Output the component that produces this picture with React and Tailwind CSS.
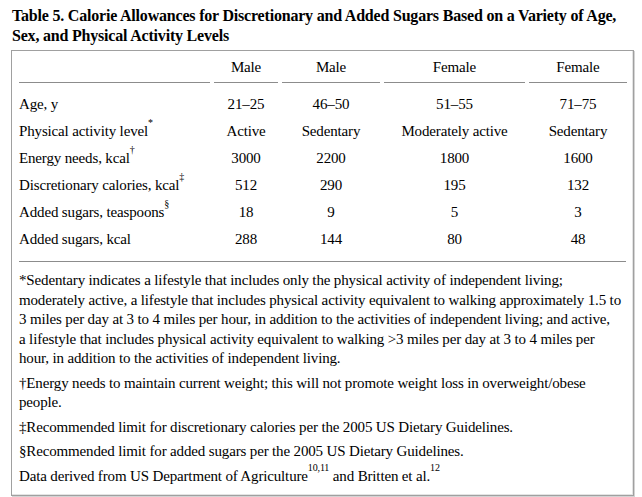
import React from "react";

const rows = [
  { label: "Age, y", sup: null, vals: ["21–25", "46–50", "51–55", "71–75"] },
  { label: "Physical activity level", sup: "*", vals: ["Active", "Sedentary", "Moderately active", "Sedentary"] },
  { label: "Energy needs, kcal", sup: "†", vals: ["3000", "2200", "1800", "1600"] },
  { label: "Discretionary calories, kcal", sup: "‡", vals: ["512", "290", "195", "132"] },
  { label: "Added sugars, teaspoons", sup: "§", vals: ["18", "9", "5", "3"] },
  { label: "Added sugars, kcal", sup: null, vals: ["288", "144", "80", "48"] },
];

const heads = ["Male", "Male", "Female", "Female"];

const cols = "grid grid-cols-[191px_64px_98px_141px_98px] gap-x-[4px]";

const App = () => {
  return (
    <div className="w-[642px] h-[497px] bg-white text-black overflow-hidden font-['Liberation_Serif']">
      <h1 className="pl-[12px] pt-[6px] text-[16px] leading-[20px] font-bold tracking-[-0.2px] whitespace-nowrap">
        Table 5. Calorie Allowances for Discretionary and Added Sugars Based on a Variety of Age,
        <br />
        Sex, and Physical Activity Levels
      </h1>

      <div className="ml-[11px] mt-[4px] w-[623px] h-[446px] border border-[#a0a0a0] shadow-[inset_-1px_-1px_0_#e4e4e4,1px_1px_0_#d4d4d4] px-[7px] text-[15px] tracking-[-0.15px]">
        {/* encabezado */}
        <div className={`${cols} pt-[7px]`}>
          <div className="border-b border-[#8c8c8c] h-[25px]" />
          {heads.map((h, i) => (
            <div key={i} className="border-b border-[#8c8c8c] h-[25px] text-center leading-[18px]">
              {h}
            </div>
          ))}
        </div>

        {/* filas */}
        <div className="pt-[8px] pb-[8px] border-b border-[#8c8c8c]">
          {rows.map((r) => (
            <div key={r.label} className={`${cols} h-[27px] items-center`}>
              <div className="whitespace-nowrap">
                {r.label}
                {r.sup && <sup className="text-[10px] align-[5px] leading-none">{r.sup}</sup>}
              </div>
              {r.vals.map((v, i) => (
                <div key={i} className="text-center whitespace-nowrap">
                  {v}
                </div>
              ))}
            </div>
          ))}
        </div>

        {/* notas */}
        <div className="pt-[9px] space-y-[5px] leading-[19.5px] whitespace-nowrap">
          <p>
            *Sedentary indicates a lifestyle that includes only the physical activity of independent living;
            <br />
            moderately active, a lifestyle that includes physical activity equivalent to walking approximately 1.5 to
            <br />
            3 miles per day at 3 to 4 miles per hour, in addition to the activities of independent living; and active,
            <br />
            a lifestyle that includes physical activity equivalent to walking &gt;3 miles per day at 3 to 4 miles per
            <br />
            hour, in addition to the activities of independent living.
          </p>
          <p>
            †Energy needs to maintain current weight; this will not promote weight loss in overweight/obese
            <br />
            people.
          </p>
          <p>‡Recommended limit for discretionary calories per the 2005 US Dietary Guidelines.</p>
          <p>§Recommended limit for added sugars per the 2005 US Dietary Guidelines.</p>
          <p>
            Data derived from US Department of Agriculture
            <sup className="text-[10px] align-[5px] leading-none">10,11</sup> and Britten et al.
            <sup className="text-[10px] align-[5px] leading-none">12</sup>
          </p>
        </div>
      </div>
    </div>
  );
};

export default App;
